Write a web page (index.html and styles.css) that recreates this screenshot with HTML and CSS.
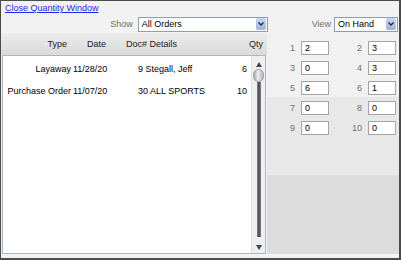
FILE: index.html
```html
<!DOCTYPE html>
<html lang="en">
<head>
  <meta charset="UTF-8" />
  <title>Quantity Window</title>
  <link rel="stylesheet" href="styles.css">
</head>
<body>
  <div class="window">
    <div class="topbar">
      <a href="#">Close Quantity Window</a>
    </div>

    <!-- Filters -->
    <div class="filters">
      <span class="filter-label">Show</span>
      <div class="select select-orders">
        <span>All Orders</span>
        <span class="arrow"><svg width="6" height="4" viewBox="0 0 6 4"><path d="M0.5 0.5 L3 3 L5.5 0.5" fill="none" stroke="#1d2a55" stroke-width="1.3"/></svg></span>
      </div>
      <span class="filter-label view-label">View</span>
      <div class="select select-view">
        <span>On Hand</span>
        <span class="arrow"><svg width="6" height="4" viewBox="0 0 6 4"><path d="M0.5 0.5 L3 3 L5.5 0.5" fill="none" stroke="#1d2a55" stroke-width="1.3"/></svg></span>
      </div>
    </div>

    <div class="content">
      <!-- Orders list -->
      <div class="orders">
        <div class="thead">
          <span class="col-type">Type</span>
          <span class="col-date">Date</span>
          <span>Doc# Details</span>
          <span>Qty</span>
        </div>
        <div class="list">
          <div class="rows">
            <div class="row">
              <span class="col-type">Layaway</span>
              <span class="col-date">11/28/20</span>
              <span>9 Stegall, Jeff</span>
              <span>6</span>
            </div>
            <div class="row">
              <span class="col-type">Purchase Order</span>
              <span class="col-date">11/07/20</span>
              <span>30 ALL SPORTS</span>
              <span>10</span>
            </div>
          </div>
          <div class="scrollbar">
            <svg class="scroll-up" width="6" height="5" viewBox="0 0 6 5"><path d="M3 0 L6 5 L0 5 Z" fill="#444"/></svg>
            <div class="knob"></div>
            <div class="track"></div>
            <svg class="scroll-down" width="6" height="5" viewBox="0 0 6 5"><path d="M0 0 L6 0 L3 5 Z" fill="#444"/></svg>
          </div>
        </div>
      </div>

      <!-- Quantity per store -->
      <div class="qty-panel">
        <span class="qty-label">1</span><span class="qty-box">2</span>
        <span class="qty-label">2</span><span class="qty-box">3</span>
        <span class="qty-label">3</span><span class="qty-box">0</span>
        <span class="qty-label">4</span><span class="qty-box">3</span>
        <span class="qty-label">5</span><span class="qty-box">6</span>
        <span class="qty-label">6</span><span class="qty-box">1</span>
        <span class="qty-label">7</span><span class="qty-box">0</span>
        <span class="qty-label">8</span><span class="qty-box">0</span>
        <span class="qty-label">9</span><span class="qty-box">0</span>
        <span class="qty-label">10</span><span class="qty-box">0</span>
      </div>
    </div>
  </div>
</body>
</html>
```

FILE: styles.css
```css
* { box-sizing: border-box; }
body {
  margin: 0;
  font-family: 'Liberation Sans', Arial, sans-serif;
  font-size: 9px;
  color: #000;
}
.window {
  width: 401px;
  height: 260px;
  border: 1px solid #4b4b4b;
  border-right-width: 2px;
  border-bottom-width: 2px;
  background: #f2f2f2;
  display: flex;
  flex-direction: column;
}
.topbar {
  height: 14px;
  padding: 2px 0 0 4px;
  line-height: 11px;
}
.topbar a { color: #1c2ae6; }
.filters {
  height: 18px;
  display: flex;
  align-items: center;
  justify-content: flex-end;
  padding-right: 1px;
}
.filter-label { color: #707070; margin-right: 5px; }
.view-label { margin-right: 3px; }
.select {
  height: 15px;
  border: 1px solid #8e9cb4;
  background: #fff;
  display: flex;
  align-items: center;
  justify-content: space-between;
  padding: 0 1px 0 3px;
}
.select-orders { width: 130px; margin-right: 44px; }
.select-view { width: 64px; }
.arrow {
  width: 10px;
  height: 12px;
  border-radius: 2px;
  background: linear-gradient(#c9d6ef, #9db2dc);
  display: flex;
  align-items: center;
  justify-content: center;
}
.content {
  flex: 1;
  display: grid;
  grid-template-columns: 266px 1fr;
  padding-bottom: 4px;
}
.orders {
  display: flex;
  flex-direction: column;
}
.thead {
  height: 22px;
  display: grid;
  grid-template-columns: 66px 59px 1fr auto;
  align-items: center;
  padding-right: 4px;
  background: linear-gradient(#ececec, #dadada);
  color: #222;
}
.thead .col-type { text-align: right; }
.thead .col-date { padding-left: 20px; }
.list {
  flex: 1;
  margin: 0 1px;
  border: 1px solid #a9b7cc;
  background: #fff;
  display: flex;
}
.rows {
  flex: 1;
  padding: 2px 4px 0 0;
}
.row {
  height: 22px;
  display: grid;
  grid-template-columns: 68px 67px 1fr auto;
  align-items: center;
}
.row .col-type { text-align: right; }
.row .col-date { padding-left: 2px; }
.scrollbar {
  width: 14px;
  display: flex;
  flex-direction: column;
  align-items: center;
  background: #efefef;
  border-left: 1px solid #e0e0e0;
}
.scroll-up { margin-top: 6px; }
.knob {
  width: 11px;
  height: 13px;
  margin-top: 2px;
  border-radius: 6px;
  border: 1px solid #9a9a9a;
  background: linear-gradient(90deg, #a9a9a9, #eeeeee 45%, #b4b4b4);
}
.track {
  flex: 1;
  width: 4px;
  background: linear-gradient(90deg, #8a8a8a, #444 50%, #8a8a8a);
}
.scroll-down { margin: 8px 0 3px; }
.qty-panel {
  display: grid;
  grid-template-columns: 28px 28px 27px 28px;
  grid-auto-rows: 14px;
  column-gap: 6px;
  row-gap: 6px;
  align-content: start;
  padding-top: 8px;
  background: linear-gradient(#f1f1f1 0 64px, #e8e8e8 64px 142px, #dcdcdc 142px);
}
.qty-label {
  text-align: right;
  line-height: 14px;
  color: #707070;
}
.qty-box {
  border: 1px solid #a4a4a4;
  background: #fff;
  padding-left: 3px;
  line-height: 12px;
  color: #000;
}
```
